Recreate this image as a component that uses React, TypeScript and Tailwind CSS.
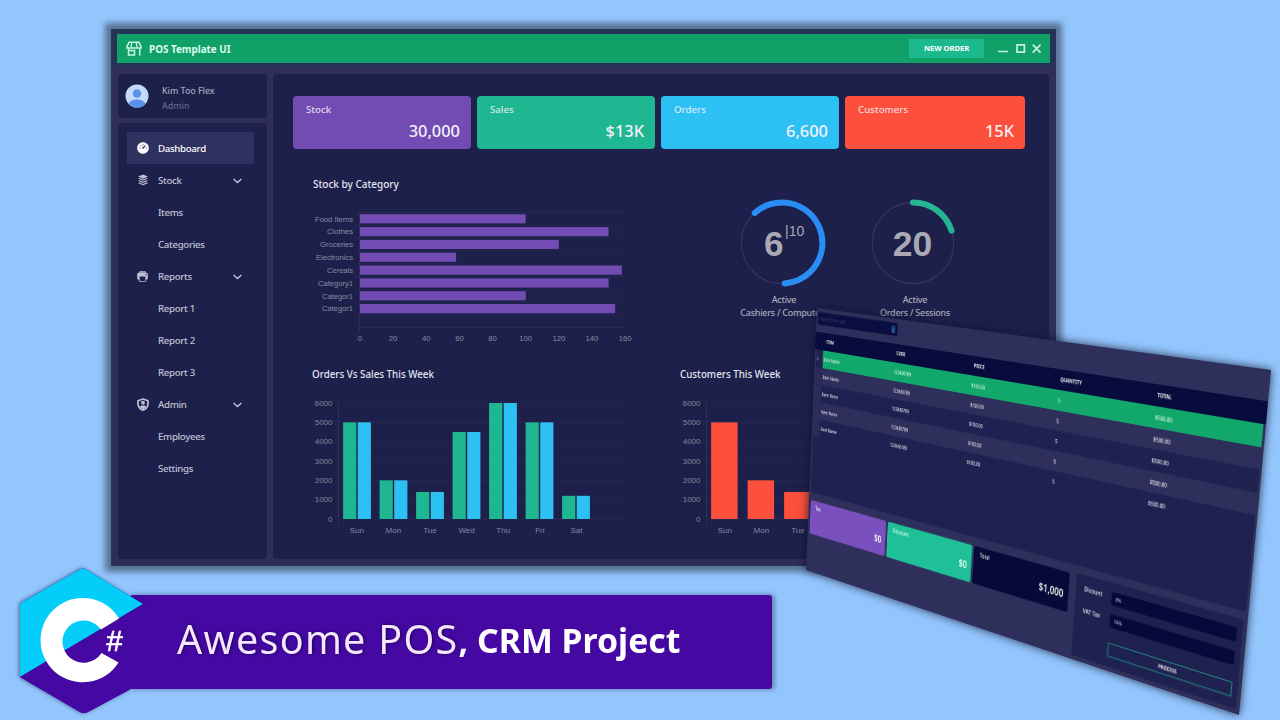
import React from "react";
import { RiDashboard3Fill } from "react-icons/ri";
import { IoPrint } from "react-icons/io5";
import { BsCalculatorFill } from "react-icons/bs";

type Point = [number, number];

const PLANE_W = 500;
const PLANE_H = 320;
const CORNERS: Point[] = [
  [817, 308],
  [1271, 370],
  [1239, 715],
  [806, 570],
];

function projection(w: number, h: number, [p0, p1, p2, p3]: Point[]) {
  const dx1 = p1[0] - p2[0];
  const dx2 = p3[0] - p2[0];
  const sx = p0[0] - p1[0] + p2[0] - p3[0];
  const dy1 = p1[1] - p2[1];
  const dy2 = p3[1] - p2[1];
  const sy = p0[1] - p1[1] + p2[1] - p3[1];
  const det = dx1 * dy2 - dx2 * dy1;
  const g = (sx * dy2 - dx2 * sy) / det;
  const k = (dx1 * sy - sx * dy1) / det;
  const a = p1[0] - p0[0] + g * p1[0];
  const b = p3[0] - p0[0] + k * p3[0];
  const d = p1[1] - p0[1] + g * p1[1];
  const e = p3[1] - p0[1] + k * p3[1];
  return `matrix3d(${[a / w, d / w, 0, g / w, b / h, e / h, 0, k / h, 0, 0, 1, 0, p0[0], p0[1], 0, 1].join(",")})`;
}

function StackIcon() {
  return (
    <svg width="12" height="12" viewBox="0 0 22 24" fill="currentColor">
      <path d="M11 1 21 5.2 11 9.4 1 5.2z" />
      <path d="M1 9.2l3-1.2 7 3 7-3 3 1.2-10 4.3z" />
      <path d="M1 13.8l3-1.2 7 3 7-3 3 1.2-10 4.3z" />
      <path d="M1 18.4l3-1.2 7 3 7-3 3 1.2-10 4.3z" />
    </svg>
  );
}

function ShieldIcon() {
  return (
    <svg width="12" height="13" viewBox="0 0 24 26" fill="none" stroke="currentColor">
      <path d="M12 2 22 5.500V12c0 6-4 10-10 12.500C6 22 2 18 2 12V5.500z" strokeWidth="3.400" strokeLinejoin="round" />
      <circle cx="12" cy="9.500" r="3.800" fill="currentColor" stroke="none" />
      <path d="M5 17.500C7 15 9.500 14.800 12 14.800s5 .2 7 2.700L12 23z" fill="currentColor" stroke="none" />
    </svg>
  );
}

function StoreIcon() {
  return (
    <svg width="16" height="15" viewBox="0 0 32 30" fill="none" stroke="#c9f7e2" strokeWidth="3">
      <path d="M6 2.500h20l4 9v2.500H2v-2.500z" />
      <path d="M11.500 3l-1.500 10M20.500 3l1.500 10" strokeWidth="2.600" />
      <path d="M5 15v13h12V19H6M27.500 15v14" />
    </svg>
  );
}

type NavEntry = { label: string; icon?: React.ReactNode; active?: boolean; group?: boolean };

const NAV: NavEntry[] = [
  { label: "Dashboard", icon: <RiDashboard3Fill size={14} />, active: true },
  { label: "Stock", icon: <StackIcon />, group: true },
  { label: "Items" },
  { label: "Categories" },
  { label: "Reports", icon: <IoPrint size={13} />, group: true },
  { label: "Report 1" },
  { label: "Report 2" },
  { label: "Report 3" },
  { label: "Admin", icon: <ShieldIcon />, group: true },
  { label: "Employees" },
  { label: "Settings" },
];

function NavItem({ label, icon, active, group }: NavEntry) {
  return (
    <div
      className={
        "flex h-8 items-center pr-[12px] text-[9.700px] font-medium tracking-[-0.33px] " +
        (active ? "bg-[#2f315e] text-white" : "text-[#c0c0d3]")
      }
    >
      <span className="flex w-[31px] shrink-0 justify-center">{icon}</span>
      <span className="flex-1 whitespace-nowrap pt-[2px]">{label}</span>
      {group && (
        <svg width="9" height="6" viewBox="0 0 9 6" fill="none" stroke="currentColor" strokeWidth="1.4" className="mt-px">
          <path d="M.6 1l3.9 3.6L8.400 1" />
        </svg>
      )}
    </div>
  );
}

const CARDS = [
  { label: "Stock", value: "30,000", cls: "bg-[#724cb3] w-[178px]" },
  { label: "Sales", value: "$13K", cls: "bg-[#1fb791] w-[178px]" },
  { label: "Orders", value: "6,600", cls: "bg-[#2cc0f3] w-[178px]" },
  { label: "Customers", value: "15K", cls: "bg-[#fc4f3c] w-[180px]" },
];

function StatCard({ label, value, cls }: { label: string; value: string; cls: string }) {
  return (
    <div className={"flex h-[53px] shrink-0 flex-col rounded-[4px] pl-[13px] pr-[11px] pt-[7px] text-[#f3effa] " + cls}>
      <span className="text-[9.700px] font-medium leading-[14px] opacity-85">{label}</span>
      <span className="mt-[3px] self-end text-[16.4px] font-medium leading-[22px]">{value}</span>
    </div>
  );
}

const CATEGORIES: [string, number, number][] = [
  ["Food Items", 100, 38],
  ["Clothes", 150, 26],
  ["Groceries", 120, 33],
  ["Electronics", 58, 37],
  ["Cereals", 158, 26],
  ["Category1", 150, 35],
  ["Categor1", 100, 31],
  ["Categor1", 154, 31],
];

function CategoryChart() {
  return (
    <svg width="330" height="150" viewBox="308 205 330 150" className="block font-['Liberation_Sans',sans-serif] text-[7.7px]">
      {Array.from({ length: 9 }, (_, i) => (
        <rect key={i} x="354" y={212 + i * 12.83} width="272" height="1" fill="#25284f" />
      ))}
      <rect x="354" y="327" width="272" height="1" fill="#25284f" />
      <rect x="359" y="212" width="1" height="120" fill="#2d2f58" />
      {CATEGORIES.map(([name, v, w], i) => (
        <g key={i}>
          <text x="353" y={221.600 + i * 12.83} textAnchor="end" textLength={w} fill="#8a8aa0">
            {name}
          </text>
          <rect x="360" y={214.2 + i * 12.83} width={v * 1.657} height="9.200" fill="#724cb3" />
        </g>
      ))}
      {[0, 20, 40, 60, 80, 100, 120, 140, 160].map((n) => (
        <text key={n} x={360 + n * 1.657} y="341" textAnchor="middle" fill="#8a8aa0">
          {n}
        </text>
      ))}
    </svg>
  );
}

const DAYS = ["Sun", "Mon", "Tue", "Wed", "Thu", "Fri", "Sat"];
const WEEK = [5000, 2000, 1400, 4500, 6000, 5000, 1200];

function WeekChart({ series, width }: { series: string[]; width: number }) {
  const bar = series.length === 2 ? 13.2 : 26.5;
  return (
    <svg width={width} height="145" viewBox={`310 395 ${width} 145`} className="block font-['Liberation_Sans',sans-serif] text-[8px]">
      {[0, 1, 2, 3, 4, 5, 6].map((k) => (
        <g key={k}>
          <rect x="335" y={518.500 - k * 19.33} width="295" height="1" fill="#25284f" />
          <text x="332.500" y={521.500 - k * 19.33} textAnchor="end" fill="#85859c">
            {k * 1000}
          </text>
        </g>
      ))}
      <rect x="338" y="403" width="1" height="121" fill="#2d2f58" />
      {DAYS.map((d, i) => (
        <g key={d}>
          {series.map((c, s) => (
            <rect
              key={c}
              x={343.100 + i * 36.5 + s * 14.6}
              y={519 - (WEEK[i] / 1000) * 19.33}
              width={bar}
              height={(WEEK[i] / 1000) * 19.33}
              fill={c}
            />
          ))}
          <text x={356.800 + i * 36.6} y="532.500" textAnchor="middle" fill="#85859c">
            {d}
          </text>
        </g>
      ))}
    </svg>
  );
}

function Gauge({ start, end, large, color, children, caption }: { start: Point; end: Point; large: 0 | 1; color: string; children: React.ReactNode; caption: string[] }) {
  return (
    <div className="flex w-[131px] flex-col items-center">
      <svg width="100" height="94" viewBox="-50 -47 100 94" className="block font-['Liberation_Sans',sans-serif]">
        <circle r="40.600" fill="none" stroke="#34355f" strokeWidth="1.2" />
        <path
          d={`M${start[0]} ${start[1]}A40.500 40.500 0 ${large} 1 ${end[0]} ${end[1]}`}
          fill="none"
          stroke={color}
          strokeWidth="6"
          strokeLinecap="round"
        />
        {children}
      </svg>
      <div className="mt-[4px] whitespace-nowrap pl-[5px] text-center text-[9px] font-medium leading-[12.500px] tracking-[-0.26px] text-[#a9a9b6]">
        {caption[0]}
        <br />
        {caption[1]}
      </div>
    </div>
  );
}

function DashboardWindow() {
  return (
    <div className="absolute left-[111px] top-[29px] flex h-[537px] w-[945px] flex-col bg-[#2e2e57] pl-[6px] pr-[6px] shadow-[0_0_6px_6px_rgba(38,48,62,0.55)]">
      <div className="-mx-[6px] bg-[#253357] px-[6px] py-[5px]">
        <header className="flex h-[29px] items-center bg-[#10a068] pl-[9px] pr-[8px]">
          <StoreIcon />
          <span className="ml-[7px] flex-1 pt-px text-[9.900px] font-bold text-[#dffbef]">POS Template UI</span>
          <button className="h-[19px] w-[75px] bg-[#1cb88e] text-[7.7px] font-bold tracking-[-0.1px] text-white">NEW ORDER</button>
          <svg width="44" height="12" viewBox="0 0 44 12" fill="none" stroke="#c4f3df" strokeWidth="1.700" className="ml-[14px]">
            <path d="M0 8.500h10M19 1.800h7.400v7.400H19zM34.700 1.600l7.800 8M42.500 1.600l-7.800 8" />
          </svg>
        </header>
      </div>
      <div className="flex flex-1 gap-[6px] pb-[7px] pl-px pr-px pt-[6px]">
        <aside className="flex w-[149px] flex-col gap-[5px]">
          <div className="flex h-[44px] items-center rounded-[4px] bg-[#1d204b] pl-[7px]">
            <svg width="24" height="24" viewBox="0 0 24 24">
              <clipPath id="avatar">
                <circle cx="12" cy="12" r="11.500" />
              </clipPath>
              <g clipPath="url(#avatar)">
                <rect width="24" height="24" fill="#c5dafb" />
                <circle cx="12" cy="9.500" r="4.200" fill="#5b92e8" />
                <ellipse cx="12" cy="20.500" rx="8.500" ry="5" fill="#5b92e8" />
              </g>
            </svg>
            <div className="ml-[13px] pt-[5px] text-[8.800px] font-medium leading-[15px] text-[#a9a9bd]">
              <div>Kim Too Flex</div>
              <div className="text-[#65668a]">Admin</div>
            </div>
          </div>
          <nav className="flex flex-1 flex-col rounded-[4px] bg-[#1d204b] pl-[9px] pr-[13px] pt-[9px]">
            {NAV.map((n) => (
              <NavItem key={n.label} {...n} />
            ))}
          </nav>
        </aside>
        <main className="flex flex-1 flex-col overflow-hidden rounded-[4px] bg-[#1d204b] pl-[20px] pt-[22px]">
          <div className="flex gap-[6px]">
            {CARDS.map((c) => (
              <StatCard key={c.label} {...c} />
            ))}
          </div>
          <div className="mt-[28px] flex">
            <section className="w-[423px] pl-[20px]">
              <h2 className="h-[28px] text-[10px] font-medium leading-[14px] text-[#e4e4ee]">Stock by Category</h2>
              <div className="-ml-[5px]">
                <CategoryChart />
              </div>
            </section>
            <section className="flex pt-[19px]">
              <Gauge start={[-27.3, -30]} end={[2.7, 40.400]} large={1} color="#2a8df5" caption={["Active", "Cashiers / Computers"]}>
                <text x="-18" y="12.800" fontSize="35" fontWeight="700" fill="#a9a9b4">6</text>
                <text x="3" y="-7.500" fontSize="14" fill="#a9a9b4">|10</text>
              </Gauge>
              <Gauge start={[0, -40.500]} end={[38.500, -12.400]} large={0} color="#25b593" caption={["Active", "Orders / Sessions"]}>
                <text x="-.500" y="12.800" textAnchor="middle" fontSize="35.500" fontWeight="700" fill="#a9a9b4">20</text>
              </Gauge>
            </section>
          </div>
          <div className="mt-[12px] flex">
            <section className="w-[368px] pl-[19px]">
              <h2 className="h-[28px] text-[9.800px] font-medium leading-[15px] text-[#e4e4ee]">Orders Vs Sales This Week</h2>
              <div className="-ml-[2px]">
                <WeekChart series={["#1fb791", "#2cc0f3"]} width={330} />
              </div>
            </section>
            <section className="pl-[19px]">
              <h2 className="h-[28px] text-[9.800px] font-medium leading-[15px] text-[#e4e4ee]">Customers This Week</h2>
              <div className="-ml-[2px]">
                <WeekChart series={["#fc4f3c"]} width={330} />
              </div>
            </section>
          </div>
        </main>
      </div>
    </div>
  );
}

const HEADINGS = ["ITEM", "CODE", "PRICE", "QUANTITY", "TOTAL"];
const ROW = ["Item Name", "123456789", "$100.00", "5", "$500.00"];
const ROW_STYLES = ["bg-[#12a86c]", "bg-[#2f2f5b]", "bg-[#1f2250]", "bg-[#2f2f5b]", "bg-[#1f2250]"];

function OrderWindow() {
  return (
    <div className="pointer-events-none absolute inset-0 drop-shadow-[0_0_5px_rgba(10,16,40,0.8)]">
      <div className="h-[320px] w-[500px] origin-top-left" style={{ transform: projection(PLANE_W, PLANE_H, CORNERS) }}>
        <div
          className="flex h-[700px] w-[1500px] origin-top-left flex-col bg-[#2f2f5b] pt-[10px]"
          style={{ transform: `scale(${PLANE_W / 1500}, ${PLANE_H / 700})` }}
        >
          <div className="ml-[6px] flex h-[32px] w-[332px] items-center justify-between rounded-[5px] bg-[#0a0e40] pl-[10px] pr-[8px] text-[12px] text-[#4a4c7c]">
            <span>Scan Or Enter code</span>
            <BsCalculatorFill size={17} className="text-[#2f7fc0]" />
          </div>
          <div className="mt-[19px] flex h-[46px] items-center bg-[#080c3d] pl-[48px] text-[13px] font-bold text-white">
            {HEADINGS.map((h) => (
              <span key={h} className="w-[292px]">{h}</span>
            ))}
          </div>
          <div className="mx-[6px] h-[379px] bg-[#1f2250]">
            {ROW_STYLES.map((bg, i) => (
              <div key={i} className="flex h-[45.600px]">
                <div className={"flex w-[36px] items-center pl-[3px] text-[11px] text-white " + (i === 0 ? "bg-[#1f2250]" : "bg-[#2b2c57]")}>
                  {i === 0 ? "▷" : ""}
                </div>
                <div className={"flex flex-1 items-center pt-[2px] text-[13px] font-medium text-white " + bg}>
                  {ROW.map((c, k) => (
                    <span key={k} className={k === 0 ? "w-[291px] pl-[3px]" : "w-[292px] pl-[6px]"}>{c}</span>
                  ))}
                </div>
              </div>
            ))}
          </div>
          <div className="mt-[17px] flex pl-[9px]">
            <div className="flex gap-[7px] pt-[4px]">
              {[
                ["Tax", "$0", "bg-[#7a50bf]"],
                ["Discount", "$0", "bg-[#1fbf98]"],
                ["Total", "$1,000", "bg-[#060a38]"],
              ].map(([l, v, bg]) => (
                <div key={l} className={"flex h-[91px] w-[323px] flex-col rounded-[7px] pl-[21px] pr-[16px] pt-[6px] text-white " + bg}>
                  <span className="text-[15px] font-medium leading-[24px]">{l}</span>
                  <span className="mt-[2px] self-end text-[25.500px] font-semibold leading-[36px]">{v}</span>
                </div>
              ))}
            </div>
            <div className="ml-[22px] flex h-[187px] w-[476px] flex-col gap-[19px] rounded-[6px] bg-[#1f2250] pt-[20px] text-[15px] font-medium text-white">
              {[
                ["Dicount", "0%"],
                ["VAT Tax", "16%"],
              ].map(([l, v]) => (
                <div key={l} className="flex h-[30px] items-center">
                  <span className="w-[110px] pb-[10px] pl-[26px]">{l}</span>
                  <span className="flex h-[30px] w-[351px] items-center rounded-[7px] bg-[#060a3a] pl-[12px] text-[12px] text-[#c9c9dd]">{v}</span>
                </div>
              ))}
              <div className="ml-[110px] mt-[16px] flex h-[31px] w-[351px] items-center justify-center border-2 border-[#1fa884] text-[12px] font-bold">
                PROCESS
              </div>
            </div>
          </div>
        </div>
      </div>
    </div>
  );
}

function Banner() {
  return (
    <>
      <div className="absolute left-[130px] top-[595px] flex h-[94px] w-[642px] items-center rounded-[3px] bg-[#4508a3] pl-[47px] shadow-[2px_0_4px_1px_rgba(50,60,110,0.45)]">
        <span className="whitespace-nowrap pb-[4px] text-[39.500px] leading-none tracking-[1.300px] text-[#f7e6ff] [text-shadow:1px_0_3px_rgba(15,0,60,0.8)]">
          Awesome POS
        </span>
        <span className="whitespace-nowrap pb-[2px] text-[33.800px] font-bold leading-none text-white">, CRM Project</span>
      </div>
      <svg width="150" height="160" viewBox="10 560 150 160" className="absolute left-[10px] top-[560px] font-['Liberation_Sans',sans-serif]">
        <path
          d="M83 568.500Q85 568 87 570L143 604 131 689 88 712Q84 714 80 712L20 677V606Q20 603 23 601.500L79 570Q81 568.500 83 568.500z"
          fill="#4508a3"
          className="drop-shadow-[-1px_0_2px_rgba(20,30,70,0.6)]"
        />
        <path d="M83 568.500Q85 568 87 570L143 604 20 677V606Q20 603 23 601.500L79 570Q81 568.500 83 568.500z" fill="#05cdf9" />
        <path d="M20 677L143 604 156 604 156 688 131 688.500 88 712Q84 714 80 712z" fill="#4508a3" />
        <path d="M119 618.500A42.200 42.200 0 1 0 118.500 662.500L101.500 653A21.200 21.200 0 1 1 101 629.500z" fill="#fff" />
        <text x="106.500" y="650.500" fontSize="29" fontWeight="400" stroke="#fff" strokeWidth=".7" fill="#fff">#</text>
      </svg>
    </>
  );
}

export default function App() {
  return (
    <div className="relative h-[720px] w-[1280px] overflow-hidden bg-[#94c6fe] font-['Noto_Sans',sans-serif]">
      <DashboardWindow />
      <OrderWindow />
      <Banner />
    </div>
  );
}
